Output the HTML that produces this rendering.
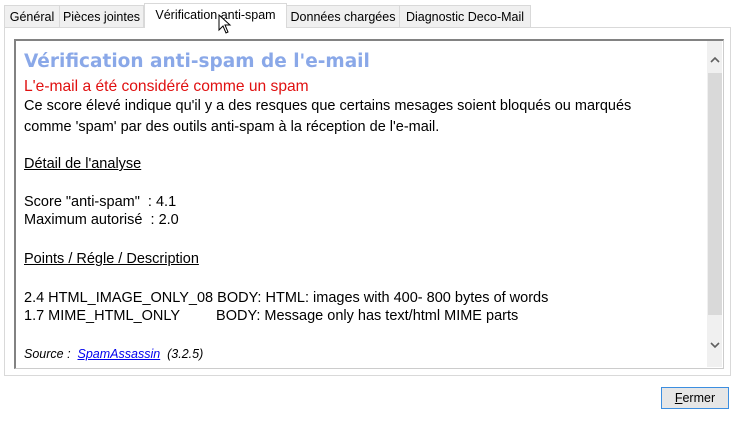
<!DOCTYPE html>
<html><head><style>
body{margin:0;width:746px;height:425px;background:#fff;font-family:"Liberation Sans",Arial,sans-serif;position:relative;overflow:hidden}
.a{position:absolute}
.tab{position:absolute;top:5px;height:22px;border:1px solid #d9d9d9;border-bottom:none;background:#f0f0f0;font-size:12.5px;line-height:22px;text-align:center;color:#000;box-sizing:border-box;white-space:nowrap}
.t{position:absolute;left:24px;font-size:14.5px;color:#000;white-space:pre;line-height:16px}
</style></head><body>
<div class="a" style="left:4px;top:27px;width:727px;height:349px;border:1px solid #d9d9d9;box-sizing:border-box;background:#fff"></div>
<div class="tab" style="left:4px;width:56px">Général</div>
<div class="tab" style="left:59px;width:85px">Pièces jointes</div>
<div class="tab" style="left:286px;width:114px">Données chargées</div>
<div class="tab" style="left:399px;width:132px">Diagnostic Deco-Mail</div>
<div class="tab" style="left:144px;top:3px;height:25px;width:143px;background:#fff;border-color:#d9d9d9">Vérification anti-spam</div>
<div class="a" style="left:14px;top:39px;width:710px;height:330px;border:1px solid #ccc;border-top:2px solid #828282;border-left:2px solid #828282;box-sizing:border-box"></div>
<div class="a" style="left:707px;top:41px;width:15px;height:326px;background:#f0f0f0"></div>
<div class="a" style="left:708px;top:73px;width:14px;height:242px;background:#d9d9d9"></div>
<svg class="a" style="left:708px;top:55px" width="14" height="10"><path d="M3 7 L7 3 L11 7" stroke="#606060" stroke-width="1.6" fill="none"/></svg>
<svg class="a" style="left:708px;top:340px" width="14" height="10"><path d="M3 3 L7 7 L11 3" stroke="#606060" stroke-width="1.6" fill="none"/></svg>
<div class="a" style="left:24px;top:51px;font-family:'DejaVu Sans',sans-serif;font-size:18.5px;font-weight:bold;color:#8aa8e8;white-space:nowrap">Vérification anti-spam de l'e-mail</div>
<div class="t" style="top:79px;font-size:15.6px;color:#e01010">L'e-mail a été considéré comme un spam</div>
<div class="t" style="top:98px">Ce score élevé indique qu'il y a des resques que certains mesages soient bloqués ou marqués</div>
<div class="t" style="top:119px">comme 'spam' par des outils anti-spam à la réception de l'e-mail.</div>
<div class="t" style="top:156px;text-decoration:underline">Détail de l'analyse</div>
<div class="t" style="top:194px">Score "anti-spam"  : 4.1</div>
<div class="t" style="top:212px">Maximum autorisé  : 2.0</div>
<div class="t" style="top:251px;text-decoration:underline">Points / Régle / Description</div>
<div class="t" style="top:290px">2.4 HTML_IMAGE_ONLY_08 BODY: HTML: images with 400- 800 bytes of words</div>
<div class="t" style="top:308px">1.7 MIME_HTML_ONLY         BODY: Message only has text/html MIME parts</div>
<div class="t" style="top:346px;font-size:12.5px;font-style:italic">Source :  <span style="color:#0000ee;text-decoration:underline">SpamAssassin</span>  (3.2.5)</div>
<div class="a" style="left:661px;top:387px;width:68px;height:22px;border:1px solid #3c8ee0;background:#e6e6e6;box-sizing:border-box;font-size:12.5px;line-height:20px;text-align:center"><u>F</u>ermer</div>
<svg class="a" style="left:218px;top:14px" width="14" height="22"><path d="M1 1 L1 16 L5 12 L8 19 L10 18 L7 11 L12 11 Z" fill="#fff" stroke="#000" stroke-width="1"/></svg>
</body></html>
